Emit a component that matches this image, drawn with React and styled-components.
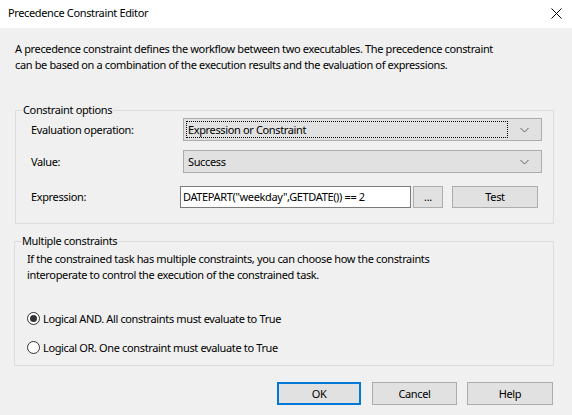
import React from 'react'
import { styled, createGlobalStyle } from 'styled-components'

const Global = createGlobalStyle`
  html, body {
    margin: 0;
    padding: 0;
    background: #f0f0f0;
  }
  * {
    box-sizing: border-box;
  }
`
const Dialog = styled.div`
  width: 572px;
  height: 415px;
  background: #f0f0f0;
  font-family: "Noto Sans", "Open Sans", sans-serif;
  font-size: 11px;
  letter-spacing: -0.36px;
  line-height: 16px;
  color: #000000;
  display: flex;
  flex-direction: column;
  overflow: hidden;
  & > * {
    flex-shrink: 0;
  }
`
const TitleBar = styled.div`
  height: 28px;
  background: #ffffff;
  display: flex;
  align-items: center;
  justify-content: space-between;
  padding: 0 10px 2px 8px;
`
const Body = styled.div`
  display: flex;
  flex-direction: column;
  padding: 13px 18px 0 14px;
`
const Intro = styled.p`
  margin: 0 0 29px 1px;
  white-space: nowrap;
`
const Group = styled.fieldset`
  margin: 0 0 ${(p) => p.$after || 0}px ${(p) => p.$inset || 0}px;
  padding: 0;
  border: 1px solid #dcdcdc;
  min-width: 0;
`
const Legend = styled.legend`
  padding: 0 1px;
  margin-left: 6px;
`
const GroupBody = styled.div`
  padding: ${(p) => p.$pad};
`
const Row = styled.div`
  display: grid;
  grid-template-columns: ${(p) => p.$labelW}px 1fr;
  align-items: center;
  height: 23px;
  margin-bottom: ${(p) => p.$after || 0}px;
`
const Combo = styled.div`
  height: 23px;
  background: #e1e1e1;
  border: 1px solid #adadad;
  display: flex;
  align-items: center;
  padding: 2px 12px 2px 2px;
  gap: 12px;
`
const ComboText = styled.span`
  flex: 1;
  height: 17px;
  line-height: 15px;
  padding-left: 1px;
  border: 1px dotted ${(p) => (p.$focus ? '#000000' : 'transparent')};
`
const ExprLine = styled.div`
  display: flex;
  align-items: center;
  gap: 2px;
  margin-left: -3px;
`
const TextBox = styled.div`
  width: 231px;
  height: 22px;
  background: #ffffff;
  border: 1px solid #7a7a7a;
  line-height: 20px;
  padding-left: 2px;
  white-space: nowrap;
`
const Button = styled.div`
  width: ${(p) => p.$w}px;
  height: ${(p) => p.$h || 23}px;
  margin-left: ${(p) => p.$ml || 0}px;
  background: #e1e1e1;
  border: ${(p) => (p.$default ? '2px solid #0078d7' : '1px solid #adadad')};
  display: flex;
  align-items: center;
  justify-content: center;
`
const Note = styled.p`
  margin: 2px 0 27px 0;
  white-space: nowrap;
`
const RadioRow = styled.label`
  display: flex;
  align-items: center;
  gap: 3px;
  height: 17px;
  margin-bottom: ${(p) => p.$after || 0}px;
`
const RadioDot = styled.span`
  width: 13px;
  height: 13px;
  border-radius: 50%;
  border: 1px solid #333333;
  background: #ffffff;
  display: flex;
  align-items: center;
  justify-content: center;
  &::after {
    content: '';
    width: 7px;
    height: 7px;
    border-radius: 50%;
    background: ${(p) => (p.$on ? '#333333' : 'transparent')};
  }
`
const Footer = styled.div`
  display: flex;
  justify-content: flex-end;
  padding: 0 19px 0 0;
  margin-top: 16px;
`

const Chevron = () => (
  <svg width="9" height="6" viewBox="0 0 9 6">
    <path d="M0.5 1 L4.5 5 L8.5 1" fill="none" stroke="#606060" strokeWidth="1" />
  </svg>
)

const CloseIcon = () => (
  <svg width="11" height="11" viewBox="0 0 11 11">
    <path d="M0.5 0.5 L10.5 10.5 M10.5 0.5 L0.5 10.5" stroke="#000" strokeWidth="1" />
  </svg>
)

const App = () => {
  return (
    <Dialog>
      <Global />
      <TitleBar>
        <span>Precedence Constraint Editor</span>
        <CloseIcon />
      </TitleBar>
      <Body>
        <Intro>
          A precedence constraint defines the workflow between two executables. The precedence constraint
          <br />
          can be based on a combination of the execution results and the evaluation of expressions.
        </Intro>
        <Group $inset={1} $after={9}>
          <Legend>Constraint options</Legend>
          <GroupBody $pad="0 11px 15px 15px">
            <Row $labelW={152} $after={9}>
              <span>Evaluation operation:</span>
              <Combo>
                <ComboText $focus>Expression or Constraint</ComboText>
                <Chevron />
              </Combo>
            </Row>
            <Row $labelW={152} $after={12}>
              <span>Value:</span>
              <Combo>
                <ComboText>Success</ComboText>
                <Chevron />
              </Combo>
            </Row>
            <Row $labelW={152}>
              <span>Expression:</span>
              <ExprLine>
                <TextBox>DATEPART("weekday",GETDATE()) == 2</TextBox>
                <Button $w={30} $h={22}>...</Button>
                <Button $w={86} $h={22} $ml={7}>Test</Button>
              </ExprLine>
            </Row>
          </GroupBody>
        </Group>
        <Group>
          <Legend>Multiple constraints</Legend>
          <GroupBody $pad="0 12px 9px 12px">
            <Note>
              If the constrained task has multiple constraints, you can choose how the constraints
              <br />
              interoperate to control the execution of the constrained task.
            </Note>
            <RadioRow $after={12}>
              <RadioDot $on />
              <span>Logical AND. All constraints must evaluate to True</span>
            </RadioRow>
            <RadioRow>
              <RadioDot />
              <span>Logical OR. One constraint must evaluate to True</span>
            </RadioRow>
          </GroupBody>
        </Group>
      </Body>
      <Footer>
        <Button $w={84} $default>OK</Button>
        <Button $w={85} $ml={11}>Cancel</Button>
        <Button $w={86} $ml={10}>Help</Button>
      </Footer>
    </Dialog>
  )
}

export default App
